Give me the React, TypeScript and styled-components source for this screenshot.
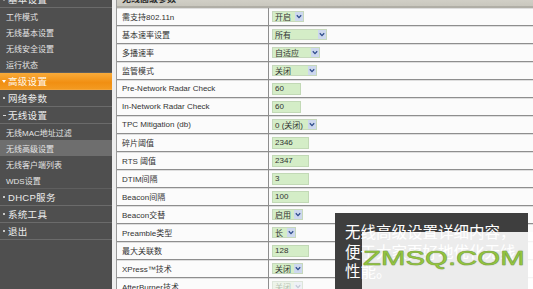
import React from 'react';
import styled, { createGlobalStyle } from 'styled-components';

const GlobalStyle = createGlobalStyle`
    html, body {
        margin: 0;
        padding: 0;
        background: #fff;
        overflow: hidden;
    }
    body {
        font-family: "Liberation Sans", "Noto Sans CJK SC", sans-serif;
    }
`;

const Screen = styled.div`
    position: relative;
    width: 533px;
    height: 289px;
    overflow: hidden;
    background: #eeeeee;
`;

// page is scrolled a little, the first menu item and table header are cut
const Scroller = styled.div`
    display: flex;
    align-items: flex-start;
    margin-top: -9px;
`;

const Sidebar = styled.nav`
    width: 112px;
    min-height: 310px;
    flex-shrink: 0;
    background: #4f4f4f;
    display: flex;
    flex-direction: column;
`;

const MainItem = styled.div<{ $active?: boolean }>`
    height: 16px;
    display: flex;
    align-items: center;
    padding-left: 1px;
    font-size: 9.5px;
    letter-spacing: 0.3px;
    color: ${ p => p.$active ? '#fff8ec' : '#ececec' };
    border-bottom: 1px solid ${ p => p.$active ? '#f3a43a' : '#6b6b6b' };
    background: ${ p => p.$active ? 'linear-gradient(#f9ab3a, #f18f12 60%, #f39a20)' : 'transparent' };
`;

const SubGroup = styled.div`
    display: flex;
    flex-direction: column;
    border-bottom: 1px solid #5f5f5f;
`;

const SubItem = styled.div<{ $active?: boolean }>`
    height: 16px;
    display: flex;
    align-items: center;
    padding-left: 6px;
    font-size: 8px;
    color: #e4e4e4;
    background: ${ p => p.$active ? '#6e6e6e' : 'transparent' };
`;

const Bullet = styled.span<{ $kind: 'dot' | 'open' | 'dash' }>`
    width: 6px;
    display: inline-flex;
    justify-content: center;
    align-items: center;
    margin-right: 1px;
    &::before {
        content: '';
        display: block;
        ${ p => p.$kind === 'dot' && 'width: 2px; height: 2px; background: #c8c8c8;' }
        ${ p => p.$kind === 'dash' && 'width: 3px; height: 1px; background: #d8d8d8;' }
        ${ p => p.$kind === 'open' && `
            width: 0; height: 0;
            border-left: 2px solid transparent;
            border-right: 2px solid transparent;
            border-top: 3px solid #fff;
        ` }
    }
`;

const Table = styled.section`
    flex: 1;
    margin-left: 4px;
    border-left: 1px solid #9a9a9a;
    background: #fbfbfb;
    display: flex;
    flex-direction: column;
`;

const HeaderRow = styled.div`
    height: 15px;
    display: flex;
    align-items: center;
    padding-left: 5px;
    font-size: 9px;
    font-weight: bold;
    color: #2b2b2b;
    background: linear-gradient(#dcdad2, #c9c7be);
    border-bottom: 2px solid #b0aea6;
`;

const Row = styled.div`
    height: 17px;
    display: grid;
    grid-template-columns: 152px 1fr;
    border-bottom: 1px solid #8e8e8e;
    box-shadow: inset 0 1px 0 #dedede;
`;

const Label = styled.div`
    display: flex;
    align-items: center;
    padding-left: 5px;
    font-size: 8px;
    color: #333;
    white-space: nowrap;
    border-right: 1px solid #8e8e8e;
`;

const Value = styled.div`
    display: flex;
    align-items: center;
    padding-left: 3px;
`;

const Input = styled.input`
    box-sizing: border-box;
    height: 12px;
    padding: 0 2px;
    font-family: inherit;
    font-size: 8px;
    color: #333;
    background: #d4edc7;
    border: 1px solid #c2d9b6;
    outline: none;
`;

const Select = styled.div<{ $disabled?: boolean }>`
    box-sizing: border-box;
    height: 11px;
    display: flex;
    align-items: stretch;
    font-size: 8px;
    color: ${ p => p.$disabled ? '#b8c4b4' : '#333' };
    background: ${ p => p.$disabled ? '#edf4ea' : '#d4edc7' };
    border: 1px solid ${ p => p.$disabled ? '#dde6da' : '#c6d8bc' };
`;

const SelectText = styled.span`
    flex: 1;
    display: flex;
    align-items: center;
    padding-left: 2px;
    white-space: nowrap;
`;

const Arrow = styled.span<{ $disabled?: boolean }>`
    width: 8px;
    display: flex;
    align-items: center;
    justify-content: center;
    background: ${ p => p.$disabled ? '#eef1f6' : '#cdd8ee' };
    color: ${ p => p.$disabled ? '#c4cad6' : '#2e4c8c' };
`;

const Caption = styled.div`
    position: absolute;
    left: 335px;
    top: 213px;
    width: 193px;
    height: 80px;
    box-sizing: border-box;
    padding: 9px 0 0 10px;
    background: #3e3e3e;
    color: #fff;
    font-family: "Noto Sans CJK SC", sans-serif;
    font-size: 15.5px;
    line-height: 19.5px;
    white-space: nowrap;
`;

const Watermark = styled.div`
    position: absolute;
    left: 362px;
    top: 232px;
    right: 0;
    bottom: 0;
    background: rgba(255, 255, 255, 0.9);
    padding: 17px 0 0 1px;
`;

const WatermarkText = styled.span`
    display: inline-block;
    font-family: "Liberation Sans", sans-serif;
    font-size: 21px;
    line-height: 17px;
    color: #95c93c;
    -webkit-text-stroke: 0.5px #7fa845;
    text-shadow: 0 0 1px #7a8666;
    transform: scaleX(1.4);
    transform-origin: left center;
`;

type Field =
    | { kind: 'select', value: string, width: number, disabled?: boolean }
    | { kind: 'input', value: string, width: number };

const rows: { label: string, field: Field }[] = [
    { label: '需支持802.11n', field: { kind: 'select', value: '开启', width: 32 } },
    { label: '基本速率设置', field: { kind: 'select', value: '所有', width: 55 } },
    { label: '多播速率', field: { kind: 'select', value: '自适应', width: 48 } },
    { label: '监管模式', field: { kind: 'select', value: '关闭', width: 45 } },
    { label: 'Pre-Network Radar Check', field: { kind: 'input', value: '60', width: 29 } },
    { label: 'In-Network Radar Check', field: { kind: 'input', value: '60', width: 29 } },
    { label: 'TPC Mitigation (db)', field: { kind: 'select', value: '0 (关闭)', width: 45 } },
    { label: '碎片阈值', field: { kind: 'input', value: '2346', width: 37 } },
    { label: 'RTS 阈值', field: { kind: 'input', value: '2347', width: 37 } },
    { label: 'DTIM间隔', field: { kind: 'input', value: '3', width: 37 } },
    { label: 'Beacon间隔', field: { kind: 'input', value: '100', width: 37 } },
    { label: 'Beacon交替', field: { kind: 'select', value: '启用', width: 31 } },
    { label: 'Preamble类型', field: { kind: 'select', value: '长', width: 24 } },
    { label: '最大关联数', field: { kind: 'input', value: '128', width: 37 } },
    { label: 'XPress™技术', field: { kind: 'select', value: '关闭', width: 31 } },
    { label: 'AfterBurner技术', field: { kind: 'select', value: '关闭', width: 31, disabled: true } },
];

const Chevron = () => (
    <svg width='6' height='5' viewBox='0 0 6 5'>
        <path d='M0.8 1.2 L3 3.6 L5.2 1.2' fill='none' stroke='currentColor' strokeWidth='1.3' />
    </svg>
);

const FieldView = ( { field }: { field: Field } ) => {
    if ( field.kind === 'input' ) {
        return <Input readOnly value={ field.value } style={ { width: field.width } } />;
    }
    return (
        <Select $disabled={ field.disabled } style={ { width: field.width } }>
            <SelectText>{ field.value }</SelectText>
            <Arrow $disabled={ field.disabled }><Chevron /></Arrow>
        </Select>
    );
};

export default function App(): JSX.Element {
    return (
        <Screen>
            <GlobalStyle />
            <Scroller>
                <Sidebar>
                    <MainItem><Bullet $kind='open' />基本设置</MainItem>
                    <SubGroup>
                        <SubItem>工作模式</SubItem>
                        <SubItem>无线基本设置</SubItem>
                        <SubItem>无线安全设置</SubItem>
                        <SubItem>运行状态</SubItem>
                    </SubGroup>
                    <MainItem $active><Bullet $kind='open' />高级设置</MainItem>
                    <MainItem><Bullet $kind='dot' />网络参数</MainItem>
                    <MainItem><Bullet $kind='dash' />无线设置</MainItem>
                    <SubGroup>
                        <SubItem>无线MAC地址过滤</SubItem>
                        <SubItem $active>无线高级设置</SubItem>
                        <SubItem>无线客户端列表</SubItem>
                        <SubItem>WDS设置</SubItem>
                    </SubGroup>
                    <MainItem><Bullet $kind='dot' />DHCP服务</MainItem>
                    <MainItem><Bullet $kind='dot' />系统工具</MainItem>
                    <MainItem><Bullet $kind='dot' />退出</MainItem>
                </Sidebar>
                <Table>
                    <HeaderRow>无线高级参数</HeaderRow>
                    { rows.map( r => (
                        <Row key={ r.label }>
                            <Label>{ r.label }</Label>
                            <Value><FieldView field={ r.field } /></Value>
                        </Row>
                    ) ) }
                </Table>
            </Scroller>
            <Caption>
                无线高级设置详细内容，<br />
                便于大家更好地优化无线<br />
                性能。
            </Caption>
            <Watermark>
                <WatermarkText>ZMSQ.COM</WatermarkText>
            </Watermark>
        </Screen>
    );
}
